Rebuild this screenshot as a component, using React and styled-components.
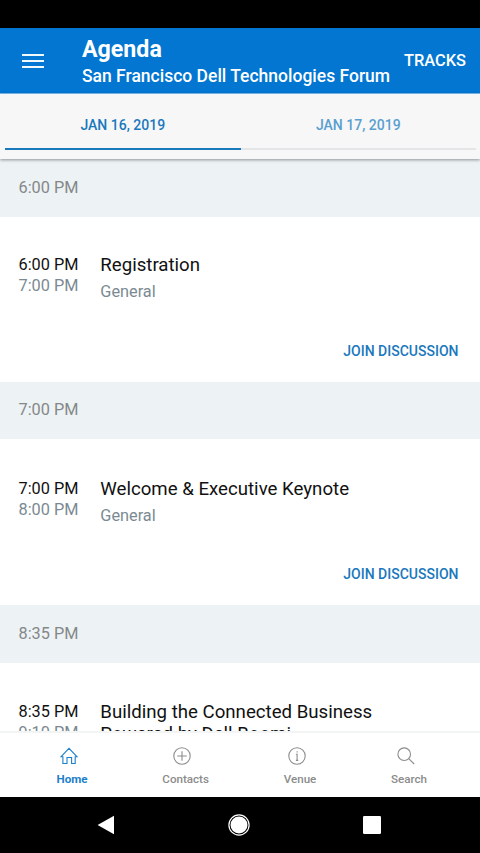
import React, { useState } from "react";
import styled, { createGlobalStyle } from "styled-components";

const days = ["JAN 16, 2019", "JAN 17, 2019"];

const sessions = [
  {
    start: "6:00 PM",
    end: "7:00 PM",
    title: "Registration",
    track: "General",
    band: 58,
    top: 37,
    height: 165,
  },
  {
    start: "7:00 PM",
    end: "8:00 PM",
    title: "Welcome & Executive Keynote",
    track: "General",
    band: 57,
    top: 39,
    height: 166,
  },
  {
    start: "8:35 PM",
    end: "9:10 PM",
    title: "Building the Connected Business Powered by Dell Boomi",
    track: "General",
    band: 58,
    top: 38,
    height: 190,
  },
];

const HomeIcon = () => (
  <svg width="18" height="18" viewBox="0 0 18 18">
    <path d="M.9 9.8 9 1.4l8.1 8.4h-1.9v6.7h-3.6v-6H7v6H2.9V9.8z" />
  </svg>
);

const ContactsIcon = () => (
  <svg width="18" height="18" viewBox="0 0 18 18">
    <circle cx="9" cy="9" r="8.2" />
    <path d="M9 4.2v9.6M4.2 9h9.6" />
  </svg>
);

const VenueIcon = () => (
  <svg width="18" height="18" viewBox="0 0 18 18">
    <circle cx="9" cy="9" r="8.2" />
    <path d="M7.9 7.2h1.2v6.2M7.9 13.4h2.4M9.1 4.3v1.3" />
  </svg>
);

const SearchIcon = () => (
  <svg width="18" height="18" viewBox="0 0 18 18">
    <circle cx="7.2" cy="7.2" r="6.3" />
    <path d="M11.7 11.7l5.5 5.3" />
  </svg>
);

const navItems = [
  { label: "Home", Icon: HomeIcon },
  { label: "Contacts", Icon: ContactsIcon },
  { label: "Venue", Icon: VenueIcon },
  { label: "Search", Icon: SearchIcon },
];

const Session = ({ start, end, title, track, band, top, height }) => (
  <>
    <TimeBand $height={band}>{start}</TimeBand>
    <SessionCard $height={height} $top={top}>
      <div className="details">
        <div className="times">
          <div>{start}</div>
          <div className="end">{end}</div>
        </div>
        <div className="info">
          <div className="title">{title}</div>
          <div className="track">{track}</div>
        </div>
      </div>
      <JoinButton>JOIN DISCUSSION</JoinButton>
    </SessionCard>
  </>
);

const App = () => {
  const [day, setDay] = useState(0);
  const [page, setPage] = useState("Home");
  return (
    <Screen>
      <GlobalStyle />
      <StatusBar />
      <Header>
        <MenuButton aria-label="Menu">
          <span />
          <span />
          <span />
        </MenuButton>
        <Heading>
          <h1>Agenda</h1>
          <h2>San Francisco Dell Technologies Forum</h2>
        </Heading>
        <TracksButton>TRACKS</TracksButton>
      </Header>
      <Tabs>
        {days.map((label, i) => (
          <Tab key={label} $active={i === day} onClick={() => setDay(i)}>
            {label}
          </Tab>
        ))}
      </Tabs>
      <Agenda>
        {sessions.map((session) => (
          <Session key={session.start} {...session} />
        ))}
      </Agenda>
      <BottomNav>
        {navItems.map(({ label, Icon }) => (
          <NavItem
            key={label}
            $active={label === page}
            onClick={() => setPage(label)}
          >
            <Icon />
            <span>{label}</span>
          </NavItem>
        ))}
      </BottomNav>
      <SystemBar>
        <svg width="18" height="20" viewBox="0 0 18 20">
          <path d="M17 .8v18.4L.6 10z" fill="#fff" />
        </svg>
        <svg width="22" height="22" viewBox="0 0 22 22">
          <circle cx="11" cy="11" r="10.1" fill="none" stroke="#fff" strokeWidth="1.2" />
          <circle cx="11" cy="11" r="8.5" fill="#fff" />
        </svg>
        <svg width="18" height="18" viewBox="0 0 18 18">
          <rect width="18" height="18" rx="1.2" fill="#fff" />
        </svg>
      </SystemBar>
    </Screen>
  );
};

export default App;

const GlobalStyle = createGlobalStyle`
  * {
    box-sizing: border-box;
  }
  body {
    margin: 0;
    font-family: Roboto, sans-serif;
  }
  button {
    border: none;
    background: none;
    padding: 0;
    font-family: inherit;
    cursor: pointer;
  }
`;

const Screen = styled.div`
  width: 480px;
  height: 853px;
  display: flex;
  flex-direction: column;
  overflow: hidden;
  background: #ffffff;
`;

const StatusBar = styled.div`
  flex: 0 0 28px;
  background: #000000;
`;

const Header = styled.header`
  flex: 0 0 66px;
  display: flex;
  align-items: center;
  padding: 0 14px 0 22px;
  background: #0276d1;
  border-bottom: 1px solid #7dbdf0;
  color: #ffffff;
`;

const MenuButton = styled.button`
  width: 22px;
  display: flex;
  flex-direction: column;
  gap: 4px;
  margin-right: 38px;
  span {
    height: 2px;
    background: #eefaff;
  }
`;

const Heading = styled.div`
  flex: 1;
  padding-top: 4px;
  white-space: nowrap;
  h1 {
    margin: 0;
    font-size: 23.2px;
    font-weight: 700;
    line-height: 28px;
  }
  h2 {
    margin: 0;
    font-size: 17.5px;
    font-weight: 500;
    line-height: 27px;
  }
`;

const TracksButton = styled.button`
  color: #ffffff;
  font-size: 16.4px;
  font-weight: 500;
`;

const Tabs = styled.div`
  flex: 0 0 65px;
  display: flex;
  padding: 0 4px 9px 5px;
  background: #f7f7f7;
  box-shadow: 0 1px 3px rgba(0, 0, 0, 0.4);
  position: relative;
  z-index: 1;
`;

const Tab = styled.button`
  flex: 1;
  padding-top: 8px;
  color: ${({ $active }) => ($active ? "#1a78bd" : "#5a9fd0")};
  border-bottom: 2px solid ${({ $active }) => ($active ? "#1a78bd" : "#e3e5e7")};
  font-size: 14px;
  font-weight: 500;
`;

const Agenda = styled.main`
  flex: 1;
  min-height: 0;
  overflow: hidden;
`;

const TimeBand = styled.div`
  height: ${({ $height }) => $height}px;
  display: flex;
  align-items: center;
  padding: 0 0 1.5px 18.5px;
  background: #edf2f5;
  color: #858889;
  font-size: 16.3px;
`;

const SessionCard = styled.section`
  height: ${({ $height }) => $height}px;
  display: flex;
  flex-direction: column;
  justify-content: space-between;
  padding: ${({ $top }) => $top}px 21.5px 22.5px 18.5px;
  .details {
    display: flex;
  }
  .times {
    width: 81.8px;
    font-size: 16.3px;
    line-height: 21.3px;
    color: #111111;
  }
  .end {
    color: #7b8a92;
  }
  .title {
    max-width: 300px;
    font-size: 18.65px;
    line-height: 22px;
    color: #111111;
  }
  .track {
    margin-top: 4.5px;
    color: #7b8a92;
    font-size: 16.3px;
    line-height: 22px;
  }
`;

const JoinButton = styled.button`
  align-self: flex-end;
  color: #1a78bd;
  font-size: 14px;
  font-weight: 500;
  line-height: 18px;
`;

const BottomNav = styled.nav`
  flex: 0 0 66px;
  display: flex;
  gap: 74.8px;
  padding-left: 56.5px;
  border-top: 2px solid #f3f4f4;
  background: #ffffff;
`;

const NavItem = styled.button`
  display: flex;
  flex-direction: column;
  align-items: center;
  padding-top: 14px;
  color: ${({ $active }) => ($active ? "#1c80cb" : "#8c8c8c")};
  font-size: 11.6px;
  font-weight: ${({ $active }) => ($active ? 700 : 500)};
  line-height: 14px;
  svg {
    margin: 0 7px 7px 0;
    fill: none;
    stroke: currentColor;
    stroke-width: 1.1;
  }
`;

const SystemBar = styled.div`
  flex: 0 0 56px;
  display: flex;
  align-items: center;
  justify-content: space-between;
  padding: 0 99px 0 97px;
  background: #000000;
`;
